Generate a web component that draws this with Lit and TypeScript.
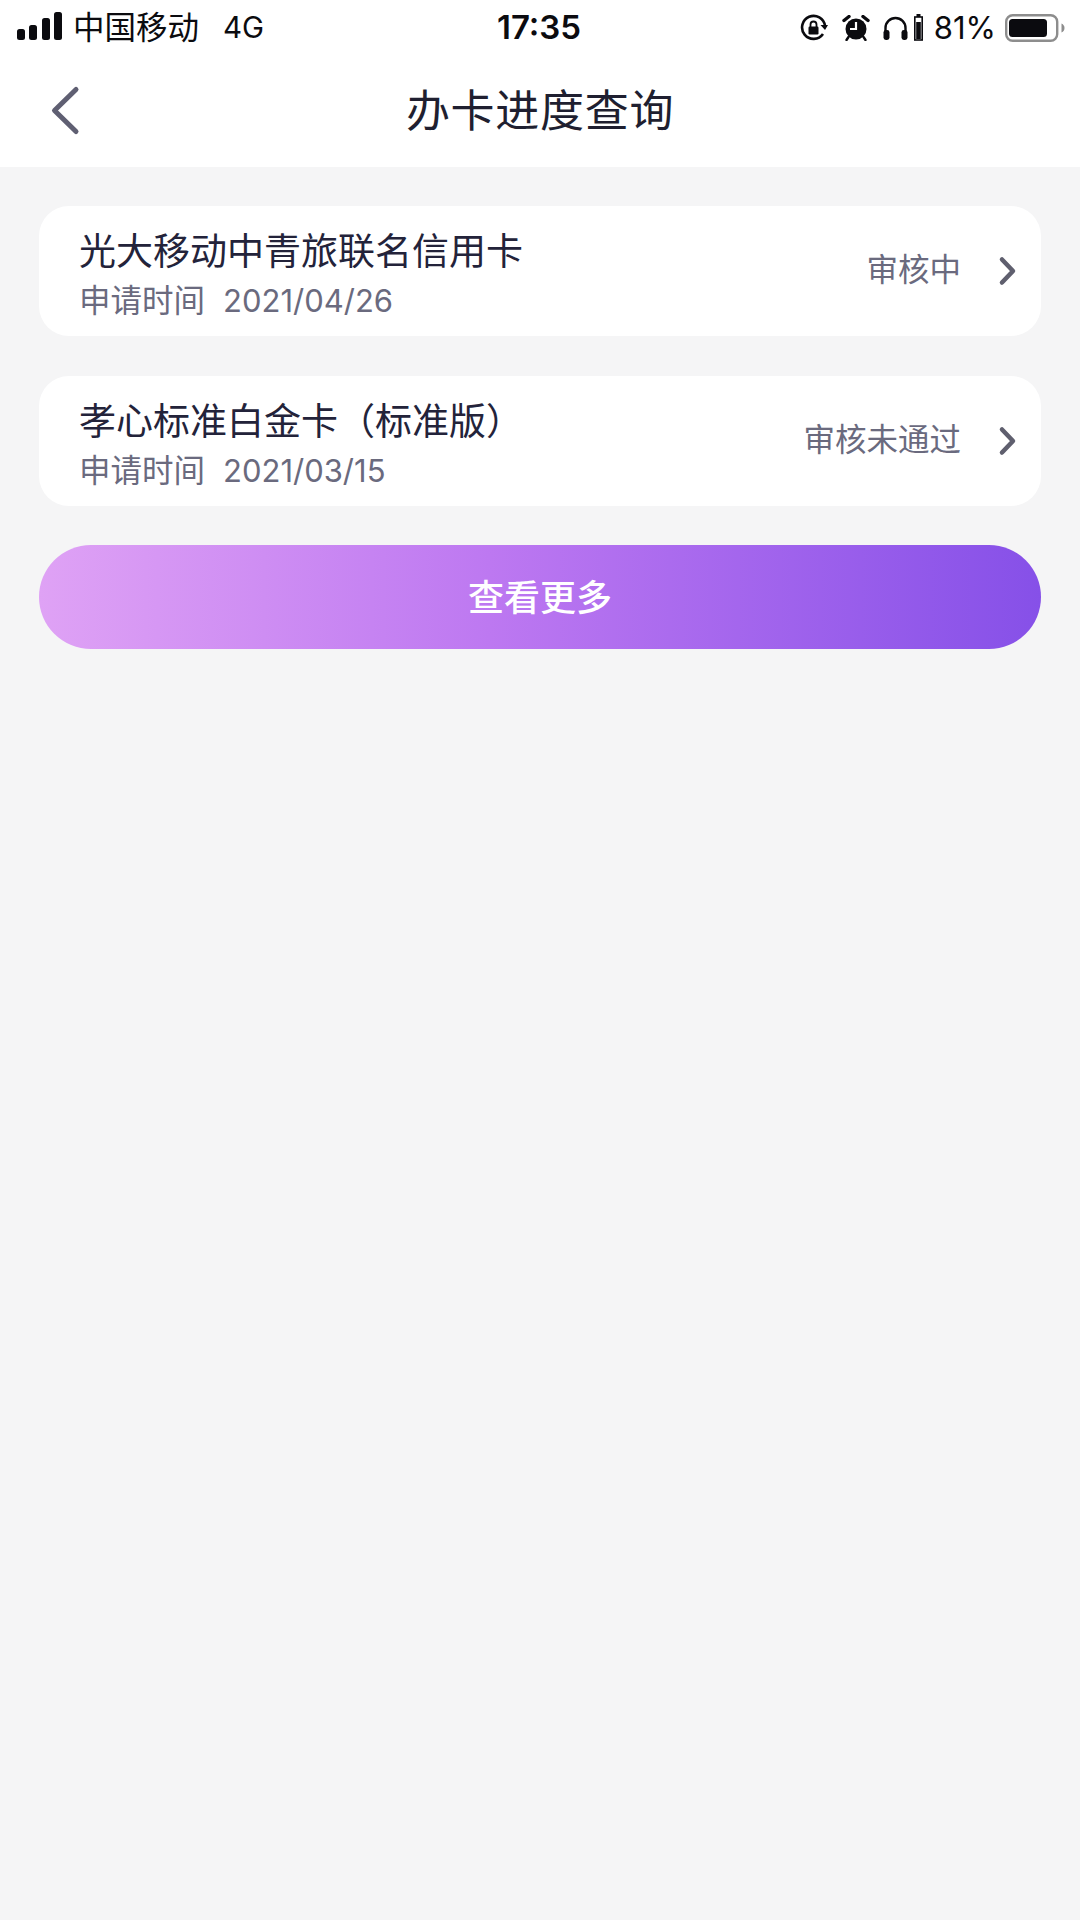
import { LitElement, html, css } from 'lit';
import { customElement } from 'lit/decorators.js';

const applications = [
  { name: '光大移动中青旅联名信用卡', date: '2021/04/26', status: '审核中' },
  { name: '孝心标准白金卡（标准版）', date: '2021/03/15', status: '审核未通过' },
];

@customElement('app-root')
export class AppRoot extends LitElement {
  static override styles = css`
    :host {
      display: block;
      width: 1080px;
      height: 1920px;
      background: #f5f5f6;
      font-family: Inter, 'Noto Sans CJK SC', sans-serif;
      overflow: hidden;
    }

    .top {
      background: #fff;
      height: 167px;
    }

    .status {
      height: 55px;
      display: flex;
      align-items: center;
      padding: 0 13px 0 17px;
      color: #0b0b0f;
      font-size: 31px;
      line-height: 55px;
    }

    .status-left,
    .status-right {
      flex: 1;
      display: flex;
      align-items: center;
    }

    .status-right {
      justify-content: flex-end;
    }

    .signal {
      margin-top: -3px;
    }

    .carrier {
      margin: -1px 0 0 11px;
      font-size: 31.5px;
    }

    .network {
      margin: -1px 0 0 24px;
      font-size: 29.5px;
    }

    .time {
      font-size: 33px;
      font-weight: 600;
      margin-right: 6px;
    }

    .status svg {
      display: block;
      flex: none;
    }

    .lock {
      margin-right: 14px;
    }

    .alarm {
      margin-right: 13px;
    }

    .phones {
      margin-right: 6px;
    }

    .pct {
      font-size: 31px;
      margin: 0 9px 0 11px;
    }

    .nav {
      height: 112px;
      display: flex;
      align-items: center;
      justify-content: center;
      position: relative;
    }

    .back {
      position: absolute;
      left: 50px;
      top: 29px;
    }

    .title {
      font-size: 44px;
      letter-spacing: 0.7px;
      color: #1f1f30;
      margin-top: -6px;
    }

    .content {
      padding: 39px 39px 0;
      display: flex;
      flex-direction: column;
      gap: 40px;
    }

    .card {
      height: 130px;
      box-sizing: border-box;
      background: #fff;
      border-radius: 30px;
      padding: 0 24px 0 40px;
      display: flex;
      align-items: center;
    }

    .info {
      flex: 1;
      min-width: 0;
      padding-top: 6px;
    }

    .name {
      font-size: 37px;
      line-height: 48px;
      color: #23233a;
    }

    .meta {
      font-size: 31.5px;
      line-height: 40px;
      margin-top: 5px;
      color: #6a6a7e;
    }

    .meta span {
      margin-left: 18px;
      font-size: 31px;
    }

    .state {
      font-size: 31.5px;
      color: #6a6a7e;
      margin: -8px 36px 0 0;
    }

    .more {
      margin-top: -1px;
      height: 104px;
      border-radius: 52px;
      background: linear-gradient(90deg, #dfa2f5 0%, #bd78f1 45%, #8650e8 100%);
      color: #fff;
      font-size: 36px;
      font-weight: 500;
      padding-bottom: 4px;
      box-sizing: border-box;
      display: flex;
      align-items: center;
      justify-content: center;
    }
  `;

  private chevron() {
    return html`<svg width="20" height="32" viewBox="0 0 20 32">
      <path d="M5 4.5 L16 16 L5 27.5" fill="none" stroke="#5f5f6e" stroke-width="4.5" stroke-linecap="round" stroke-linejoin="round" />
    </svg>`;
  }

  override render() {
    return html`
      <div class="top">
        <div class="status">
          <div class="status-left">
            <svg class="signal" width="45" height="28" viewBox="0 0 45 28">
              <rect x="0" y="17" width="8" height="11" rx="2.5" fill="#0b0b0f" />
              <rect x="12" y="13" width="8" height="15" rx="2.5" fill="#0b0b0f" />
              <rect x="25" y="6" width="8" height="22" rx="2.5" fill="#0b0b0f" />
              <rect x="37" y="0" width="8" height="28" rx="2.5" fill="#0b0b0f" />
            </svg>
            <span class="carrier">中国移动</span>
            <span class="network">4G</span>
          </div>
          <span class="time">17:35</span>
          <div class="status-right">
            <svg class="lock" width="28" height="28" viewBox="0 0 28 28">
              <path d="M23 20 A11.5 11.5 0 1 1 25 12" fill="none" stroke="#0b0b0f" stroke-width="2.6" />
              <path d="M20.5 11 L28 11 L25 16 Z" fill="#0b0b0f" />
              <rect x="8.5" y="12.5" width="10" height="8" rx="1.2" fill="#0b0b0f" />
              <path d="M10.5 13 V10.5 A3 3 0 0 1 16.5 10.5 V13" fill="none" stroke="#0b0b0f" stroke-width="1.8" />
            </svg>
            <svg class="alarm" width="28" height="26" viewBox="0 0 28 26">
              <circle cx="14" cy="14" r="10.5" fill="#0b0b0f" />
              <path d="M14 7 V14 H8" fill="none" stroke="#fff" stroke-width="2.2" />
              <path d="M2 5.5 L7 1.5 M26 5.5 L21 1.5" stroke="#0b0b0f" stroke-width="3.4" stroke-linecap="round" />
              <path d="M6.5 22 L4.5 25 M21.5 22 L23.5 25" stroke="#0b0b0f" stroke-width="2.4" stroke-linecap="round" />
            </svg>
            <svg class="phones" width="25" height="24" viewBox="0 0 25 24">
              <path d="M2.5 15 V12 A10 10 0 0 1 22.5 12 V15" fill="none" stroke="#0b0b0f" stroke-width="2.4" />
              <rect x="0.5" y="14" width="6" height="10" rx="2.4" fill="#0b0b0f" />
              <rect x="18.5" y="14" width="6" height="10" rx="2.4" fill="#0b0b0f" />
            </svg>
            <svg width="9" height="27" viewBox="0 0 9 27">
              <rect x="2.5" y="0" width="4" height="3" fill="#0b0b0f" />
              <rect x="0.8" y="3" width="7.4" height="23" fill="none" stroke="#0b0b0f" stroke-width="1.6" />
              <rect x="2.2" y="8" width="4.6" height="17" fill="#0b0b0f" />
            </svg>
            <span class="pct">81%</span>
            <svg width="62" height="28" viewBox="0 0 62 28">
              <rect x="1.2" y="1.2" width="51" height="25.6" rx="6.5" fill="none" stroke="#8d8d8d" stroke-width="2.4" />
              <rect x="4" y="5" width="38" height="18" rx="3.5" fill="#0b0b0f" />
              <path d="M56.5 9.5 C58.5 10.5 59.5 12 59.5 14 C59.5 16 58.5 17.5 56.5 18.5 Z" fill="#8d8d8d" />
            </svg>
          </div>
        </div>
        <div class="nav">
          <svg class="back" width="32" height="52" viewBox="0 0 32 52">
            <path d="M26 5.5 L4.5 26.5 L26 47.5" fill="none" stroke="#5f5f72" stroke-width="5" stroke-linecap="round" stroke-linejoin="round" />
          </svg>
          <div class="title">办卡进度查询</div>
        </div>
      </div>
      <div class="content">
        ${applications.map(
          (a) => html`
            <div class="card">
              <div class="info">
                <div class="name">${a.name}</div>
                <div class="meta">申请时间<span>${a.date}</span></div>
              </div>
              <div class="state">${a.status}</div>
              ${this.chevron()}
            </div>
          `
        )}
        <div class="more">查看更多</div>
      </div>
    `;
  }
}
